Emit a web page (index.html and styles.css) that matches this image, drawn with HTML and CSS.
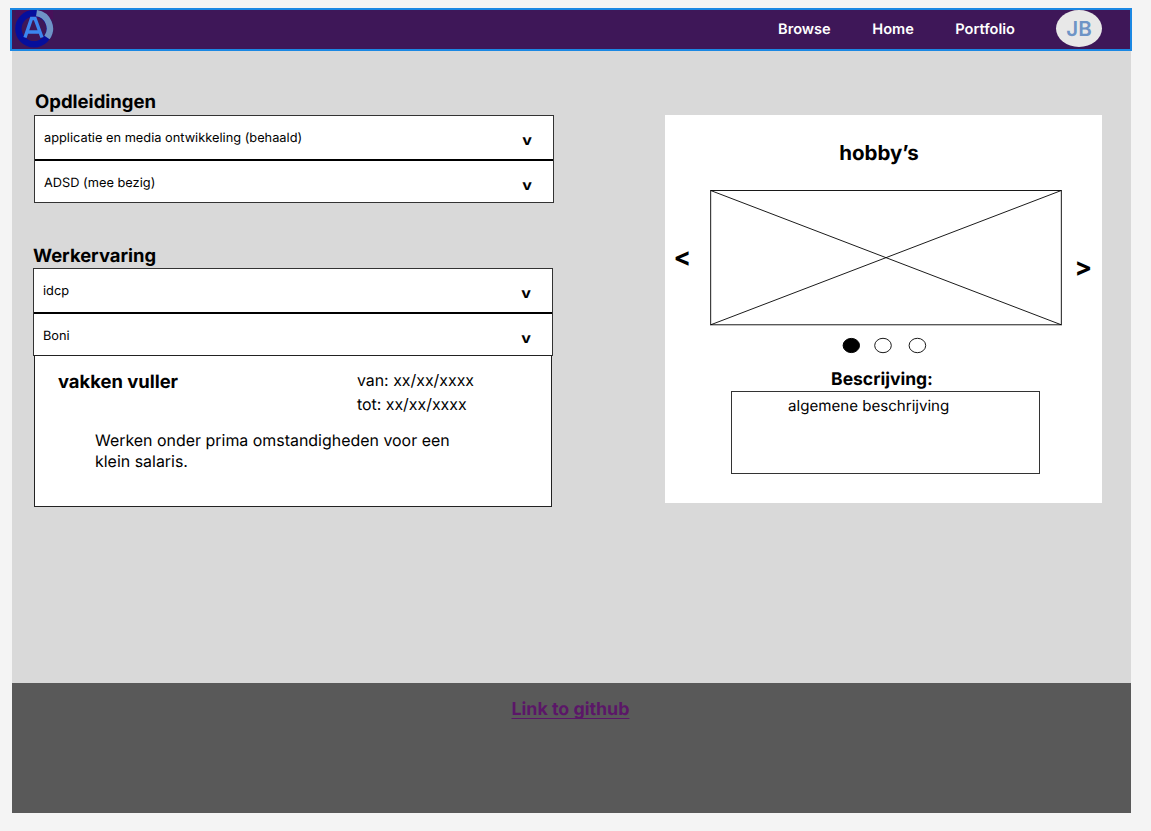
FILE: index.html
```html
<!DOCTYPE html>
<html lang="nl">
<head>
<meta charset="utf-8">
<title>Portfolio</title>
<link rel="stylesheet" href="styles.css">
</head>
<body>
<header class="topbar">
  <svg class="logo" width="42" height="38" viewBox="0 0 42 38">
    <rect x="4" y="0" width="37" height="9" fill="#48105a"/>
    <ellipse cx="22" cy="18.700" rx="15.600" ry="15.500" fill="none" stroke="#050f9c" stroke-width="6.400"/>
    <path d="M24.500 3.200A15.600 15.500 0 0 1 35 27.500" fill="none" stroke="#6f93c6" stroke-width="6.400"/>
    <path d="M13 27.500L19.500 8.500h3.500L30 27.500M16 22h11" fill="none" stroke="#3b86f0" stroke-width="3.400"/>
  </svg>
  <nav class="nav">
    <a>Browse</a>
    <a>Home</a>
    <a>Portfolio</a>
  </nav>
  <div class="avatar">JB</div>
</header>
<main class="content">
  <div class="left">
    <h2 class="title">Opdleidingen</h2>
    <div class="accordion">
      <div class="row first"><span>applicatie en media ontwikkeling (behaald)</span><span class="chevron">v</span></div>
      <div class="row"><span>ADSD (mee bezig)</span><span class="chevron">v</span></div>
    </div>
    <h2 class="title work">Werkervaring</h2>
    <div class="accordion jobs">
      <div class="row first"><span>idcp</span><span class="chevron">v</span></div>
      <div class="row"><span>Boni</span><span class="chevron">v</span></div>
    </div>
    <section class="detail">
      <div class="detail-head">
        <h3 class="job">vakken vuller</h3>
        <div class="dates"><div>van: xx/xx/xxxx</div><div>tot: xx/xx/xxxx</div></div>
      </div>
      <p class="job-text">Werken onder prima omstandigheden voor een<br>klein salaris.</p>
    </section>
  </div>
  <section class="card">
    <h2 class="card-title">hobby’s</h2>
    <div class="carousel">
      <span class="arrow prev">&lt;</span>
      <svg class="image" width="352" height="136" viewBox="0 0 352 136" fill="none" stroke="#000">
        <rect x=".7" y=".5" width="350.600" height="134.300" stroke-width=".9"/>
        <path d="M.7.5L351.300 134.800M351.300.5L.7 134.800" stroke-width=".9"/>
      </svg>
      <span class="arrow next">&gt;</span>
    </div>
    <svg class="dots" width="86" height="17" viewBox="0 0 86 17" fill="none" stroke="#000">
      <ellipse cx="9.300" cy="8.500" rx="8.200" ry="7.100" fill="#000"/>
      <ellipse cx="41" cy="8.500" rx="8.300" ry="7.200" stroke-width=".9"/>
      <ellipse cx="75.400" cy="8.500" rx="8.300" ry="7.200" stroke-width=".9"/>
    </svg>
    <h3 class="desc-title">Bescrijving:</h3>
    <div class="desc">algemene beschrijving</div>
  </section>
</main>
<footer class="footer"><a class="github">Link to github</a></footer>
</body>
</html>
```
FILE: styles.css
```css
* { box-sizing: border-box; }
body { margin: 0; padding: 8px 0 0 10px; height: 831px; overflow: hidden; background: #f4f4f4; color: #000; font-family: Inter, sans-serif; text-rendering: geometricPrecision; }
h2, h3, p { margin: 0; white-space: nowrap; }
.topbar { display: flex; width: 1122px; height: 42.500px; border: 2px solid #1b88e3; background: #3e1758; }
.logo { flex: none; }
.nav { display: flex; flex: 1; justify-content: flex-end; padding-right: 41px; gap: 41.500px; color: #fff; font-size: 14.600px; font-weight: 600; line-height: 39px; }
.avatar { width: 46px; height: 37px; margin-right: 28px; border-radius: 50%; background: #e8e8e8; color: #6e94c6; font-size: 20.500px; font-weight: 600; line-height: 37px; text-align: center; }
.content { display: flex; align-items: flex-start; width: 1119px; height: 632.500px; margin-left: 1.500px; background: #d9d9d9; }
.left { width: 653px; padding: 38px 0 0 22.500px; }
.title { height: 24px; padding-left: 1px; font-size: 18.500px; font-weight: 700; line-height: 26px; }
.accordion { width: 519.500px; height: 88px; margin-top: 2px; border: 1px solid #333; background: #fff; font-size: 12.800px; }
.row { display: flex; justify-content: space-between; height: 41px; padding: 0 21px 0 9px; line-height: 45px; }
.row.first { height: 45px; border-bottom: 2px solid #000; }
.chevron { font-size: 14px; font-weight: 700; line-height: 50px; transform: scaleX(1.150); }
.work { height: 25px; margin-top: 40px; margin-left: -1px; padding-left: 0; font-size: 18.400px; }
.jobs { margin-left: -1px; margin-top: 0; }
.detail { width: 518px; height: 152px; margin-top: -1px; border: 1px solid #222; background: #fff; }
.detail-head { display: flex; justify-content: space-between; padding: 12px 77px 0 23px; }
.job { font-size: 18.400px; line-height: 28px; }
.dates { padding-top: 1px; font-size: 15.900px; line-height: 24px; }
.job-text { padding: 13px 0 0 60px; font-size: 15.950px; line-height: 21px; }
.card { width: 437px; height: 387.500px; margin-top: 64.500px; padding-top: 24px; background: #fff; }
.card-title { padding-right: 8px; font-size: 20.500px; line-height: 27px; text-align: center; }
.carousel { display: flex; align-items: flex-start; margin-top: 24px; }
.arrow { flex: none; width: 45.500px; font-size: 26px; font-weight: 700; line-height: 32px; }
.prev { padding: 52px 0 0 9px; }
.next { padding: 62px 0 0 12.500px; }
.image { display: block; flex: none; }
.dots { display: block; margin: 11px 0 0 177.500px; }
.desc-title { height: 37px; padding: 13px 2px 0 0; font-size: 17.500px; line-height: 26px; text-align: center; }
.desc { width: 309px; height: 83px; margin-left: 66px; padding: 4px 0 0 56.500px; border: 1px solid #333; font-size: 15.100px; line-height: 20px; }
.footer { width: 1119px; height: 129.500px; margin-left: 1.500px; padding: 14px 0 0 500px; background: #595959; font-size: 17.800px; font-weight: 700; line-height: 26px; }
.github { color: #5b1668; text-decoration: underline; text-underline-offset: 3px; text-decoration-thickness: 1px; text-decoration-skip-ink: none; }
```
